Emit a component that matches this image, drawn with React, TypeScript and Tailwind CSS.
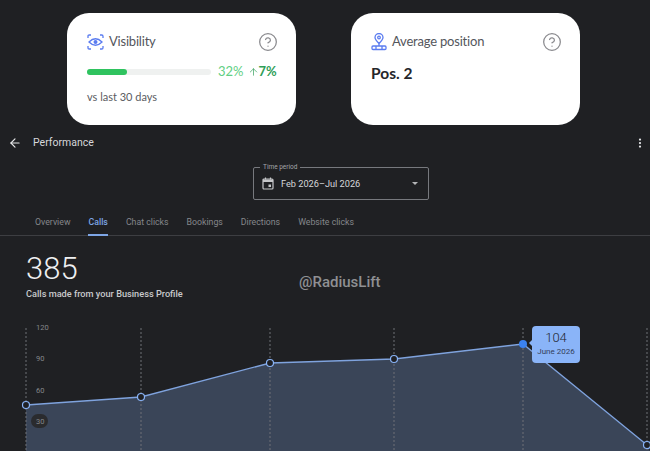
import { ArrowLeft, ArrowUp, CircleHelp, EllipsisVertical } from 'lucide-react';

const points = [
  [26, 77],
  [141, 69],
  [270, 35],
  [394, 31],
  [523, 16],
  [647, 117],
];

const tabs = ['Overview', 'Calls', 'Chat clicks', 'Bookings', 'Directions', 'Website clicks'];

function VisibilityIcon() {
  return (
    <svg width="17" height="16" viewBox="0 0 17 16" fill="none" stroke="#5b7cf0" strokeWidth="1.3">
      <path d="M1 4V2.200Q1 1 2.200 1H4M13 1h1.800Q16 1 16 2.200V4M16 12v1.800Q16 15 14.800 15H13M4 15H2.200Q1 15 1 13.800V12" />
      <path d="M2 8Q8.500 1.500 15 8Q8.500 14.500 2 8Z" />
      <circle cx="8.500" cy="8" r="2" fill="#5b7cf0" stroke="none" />
    </svg>
  );
}

function PositionIcon() {
  return (
    <svg width="16" height="18" viewBox="0 0 16 18" fill="none" stroke="#5b7cf0" strokeWidth="1.3">
      <path d="M8 10.500Q4 6.500 4 4.500a4 4 0 0 1 8 0Q12 6.500 8 10.500Z" />
      <circle cx="8" cy="4.500" r="1.300" />
      <path d="M8 10.500v2.500" />
      <rect x="1" y="13" width="14" height="3.500" rx="1" />
      <path d="M5 13v3.500M11 13v3.500" />
    </svg>
  );
}

function CalendarIcon() {
  return (
    <svg width="12" height="13" viewBox="0 0 12 13" fill="none" className="text-[#c6c7ca]">
      <rect x="1" y="2" width="10" height="10" rx="1" stroke="currentColor" strokeWidth="1.200" />
      <path d="M1 2.500h10V5H1z" fill="currentColor" />
      <path d="M3.500 0.500v2M8.500 0.500v2" stroke="currentColor" strokeWidth="1.200" />
      <rect x="6.500" y="7.500" width="2.500" height="2.500" fill="currentColor" />
    </svg>
  );
}

function Card({ children }: { children: React.ReactNode }) {
  return <div className="w-[229px] h-[112px] bg-white rounded-[22px] px-5 pt-[19px] shrink-0">{children}</div>;
}

function CardTitle({ icon, title }: { icon: React.ReactNode; title: string }) {
  return (
    <div className="flex items-center justify-between h-[20px]">
      <div className="flex items-center gap-[5px]">
        {icon}
        <span className="text-[13px] tracking-[-0.2px] text-[#54565c]">{title}</span>
      </div>
      <CircleHelp className="w-[20px] h-[20px] -mr-[2px] text-[#8a8a8e]" strokeWidth={1.500} />
    </div>
  );
}

function Chart() {
  const line = points.map((p) => p.join(',')).join(' ');
  return (
    <svg width="650" height="123" viewBox="0 0 650 123" className="block overflow-visible">
      <polygon points={`26,123 ${line} 650,123`} fill="#3a4558" />
      {points.map(([x]) => (
        <line key={x} x1={x} y1="0" x2={x} y2="123" stroke="#6e7177" strokeDasharray="2 2" />
      ))}
      <polyline points={line} fill="none" stroke="#7fa3de" strokeWidth="1.300" />
      {points.map(([x, y], i) =>
        i === 4 ? (
          <circle key={x} cx={x} cy={y} r="4" fill="#3b82f0" />
        ) : (
          <circle key={x} cx={x} cy={y} r="3.500" fill="#1f2024" stroke="#8ab4f8" strokeWidth="1.200" />
        ),
      )}
      <rect x="31" y="86" width="17" height="14" rx="7" fill="#2a2b2e" />
      <g fontFamily="Roboto, sans-serif" fontSize="7.500" fill="#85878b">
        <text x="36" y="2">120</text>
        <text x="36" y="33">90</text>
        <text x="36" y="65">60</text>
        <text x="36" y="96">30</text>
      </g>
    </svg>
  );
}

export default function App() {
  return (
    <div className="relative w-[650px] h-[451px] overflow-hidden bg-[#1f2023] font-['Roboto',sans-serif]">
      <div className="flex gap-[55px] pl-[67px] pt-[13px] font-['Lato',sans-serif]">
        <Card>
          <CardTitle icon={<VisibilityIcon />} title="Visibility" />
          <div className="flex items-center mt-[10px] h-[20px] whitespace-nowrap">
            <div className="w-[124px] h-[6px] shrink-0 rounded-full bg-[#eff1f0]">
              <div className="w-[40px] h-full rounded-full bg-[#2fc35f]" />
            </div>
            <span className="ml-[7px] text-[13px] text-[#62cf84]">32%</span>
            <ArrowUp className="ml-[4px] w-[11px] h-[14px] shrink-0 text-[#2f9e57]" strokeWidth={1.500} />
            <span className="text-[13px] font-bold text-[#2f9e57]">7%</span>
          </div>
          <div className="mt-[7px] text-[11px] text-[#5a5c62]">vs last 30 days</div>
        </Card>
        <Card>
          <CardTitle icon={<PositionIcon />} title="Average position" />
          <div className="mt-[10px] text-[15.500px] font-bold text-[#25262a]">Pos. 2</div>
        </Card>
      </div>

      <div className="flex items-center justify-between h-[32px] mt-[2px] pl-[8px] pr-[4px]">
        <div className="flex items-center gap-[11px]">
          <ArrowLeft className="w-[14px] h-[14px] text-[#e6e7e9]" strokeWidth={2} />
          <span className="text-[10.500px] text-[#d6d7da]">Performance</span>
        </div>
        <EllipsisVertical className="w-[12px] h-[12px] text-[#e6e7e9]" strokeWidth={2.500} />
      </div>

      <div className="flex justify-center mt-[8px] pl-[32px]">
        <div className="relative flex items-center w-[176px] h-[33px] border border-[#77797e] rounded-[2px] pl-[8px] pr-[10px]">
          <span className="absolute -top-[6px] left-[6px] px-[3px] bg-[#1f2023] text-[6.500px] leading-[10px] text-[#a3a5a9]">
            Time period
          </span>
          <CalendarIcon />
          <span className="ml-[7px] text-[9.200px] text-[#d6d7da]">Feb 2026–Jul 2026</span>
          <span className="ml-auto w-0 h-0 border-x-[3px] border-x-transparent border-t-[3px] border-t-[#b4b5b8]" />
        </div>
      </div>

      <div className="flex gap-[18px] mt-[9px] pl-[35px] h-[27px] border-b border-[#3d3e42] text-[8.750px] text-[#85878b]">
        {tabs.map((tab) => (
          <div
            key={tab}
            className={
              tab === 'Calls'
                ? 'h-[27px] pt-[7px] text-[#7ea6e6] font-medium border-b-2 border-[#7ea6e6]'
                : 'pt-[7px]'
            }
          >
            {tab}
          </div>
        ))}
      </div>

      <div className="pl-[26px] pt-[15px]">
        <div className="text-[31px] leading-[36px] font-light text-[#eeeff1]">385</div>
        <div className="mt-[1px] text-[9.200px] leading-[12px] font-medium text-[#c9cacd]">
          Calls made from your Business Profile
        </div>
      </div>

      <div className="absolute left-0 top-[328px]">
        <Chart />
      </div>

      <span className="absolute left-[299px] top-[271px] text-[15px] font-medium text-[#8f9093]">@RadiusLift</span>

      <div className="absolute left-[532px] top-[326px] w-[48px] h-[37px] rounded-[4px] bg-[#8ab4f8] flex flex-col items-center pt-[4px] text-[#22262e]">
        <span className="absolute -left-[3px] top-[14px] w-0 h-0 border-y-[3px] border-y-transparent border-r-[3px] border-r-[#8ab4f8]" />
        <span className="text-[13px] leading-[16px] font-light">104</span>
        <span className="text-[8px] leading-[11px] text-[#33405a]">June 2026</span>
      </div>
    </div>
  );
}
